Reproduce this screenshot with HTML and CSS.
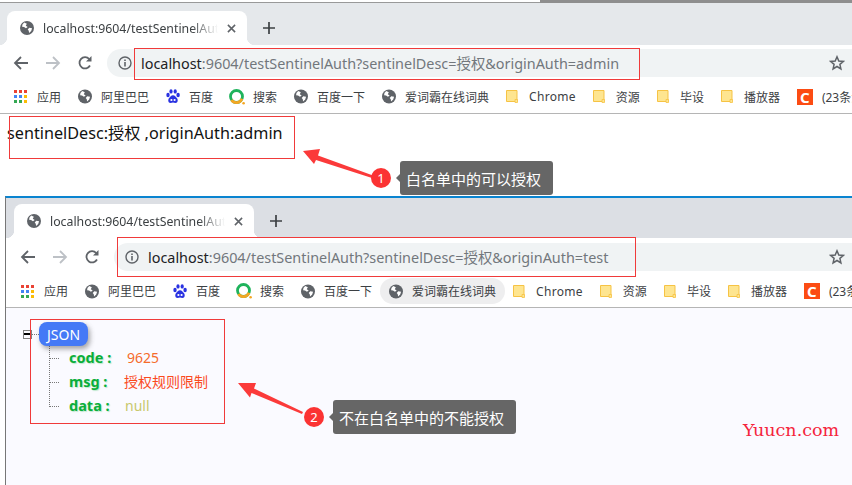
FILE: index.html
```html
<!DOCTYPE html>
<html lang="zh-CN">
<head>
<meta charset="utf-8">
<title>localhost:9604/testSentinelAuth</title>
<link rel="stylesheet" href="styles.css">
</head>
<body>
<svg class="defs" width="0" height="0" aria-hidden="true">
  <symbol id="globe" viewBox="0 0 16 16">
    <circle cx="8" cy="8" r="8" fill="#5f6368"/>
    <path d="M4.800 1.800 7.800 3.200 6.600 5.400 8.800 6.800 6.800 8.200 4.600 6.800 2.400 6.600 2.800 4Z" fill="#fff"/>
    <path d="M10.600 7.600 13.800 8.200 12.800 11.400 10.400 13.600 10 11 8.800 9.800Z" fill="#fff"/>
  </symbol>
  <symbol id="folder" viewBox="0 0 12 13">
    <path d="M.5.5h10.500v11h-10.500Z" fill="#fee590" stroke="#f6c344"/>
    <path d="M9 9.500h2.500v3h-2.500Z" fill="#fee590" stroke="#f6c344" stroke-width=".8"/>
  </symbol>
  <symbol id="apps" viewBox="0 0 13 13">
    <path d="M0 0h3v3H0z" fill="#ea4335"/><path d="M5 0h3v3H5z" fill="#ea4335"/><path d="M10 0h3v3h-3z" fill="#ea4335"/>
    <path d="M0 5h3v3H0z" fill="#4285f4"/><path d="M5 5h3v3H5z" fill="#4285f4"/><path d="M10 5h3v3h-3z" fill="#fbbc05"/>
    <path d="M0 10h3v3H0z" fill="#34a853"/><path d="M5 10h3v3H5z" fill="#34a853"/><path d="M10 10h3v3h-3z" fill="#fbbc05"/>
  </symbol>
  <symbol id="paw" viewBox="0 0 14 15">
    <g fill="#2932e1">
      <ellipse cx="2" cy="6" rx="1.700" ry="2.200"/><ellipse cx="5" cy="2.400" rx="1.600" ry="2.200"/>
      <ellipse cx="9.200" cy="2.400" rx="1.600" ry="2.200"/><ellipse cx="12.100" cy="6" rx="1.700" ry="2.200"/>
      <path d="M7 6.200c2 0 2.600 1.600 3.800 2.800 1.400 1.400 1.400 5-1.400 5-1 0-1.600-.4-2.400-.4s-1.400.4-2.400.4c-2.800 0-2.800-3.600-1.400-5C4.400 7.800 5 6.200 7 6.200Z"/>
    </g>
    <circle cx="5.400" cy="11" r="1.100" fill="#fff"/><circle cx="8.600" cy="11" r="1.100" fill="#fff"/>
  </symbol>
  <symbol id="search360" viewBox="0 0 16 16">
    <circle cx="7.500" cy="7.500" r="6" fill="none" stroke="#1fb35c" stroke-width="2.800"/>
    <path d="M2.500 11A6 6 0 0 0 13 9.800" fill="none" stroke="#f5a623" stroke-width="2.800"/>
    <circle cx="14.600" cy="14.200" r="1.300" fill="#f5a623"/>
  </symbol>
  <symbol id="back" viewBox="0 0 16 16"><path d="M15 8H2M8 2 2 8l6 6" fill="none" stroke="currentColor" stroke-width="1.800"/></symbol>
  <symbol id="forward" viewBox="0 0 16 16"><path d="M1 8h13M8 2l6 6-6 6" fill="none" stroke="currentColor" stroke-width="1.800"/></symbol>
  <symbol id="reload" viewBox="0 0 16 16">
    <path d="M13 10.500A5.600 5.600 0 1 1 12.200 4" fill="none" stroke="currentColor" stroke-width="1.800"/>
    <path d="M14.500 1v5.500H9Z" fill="currentColor"/>
  </symbol>
  <symbol id="info" viewBox="0 0 14 14">
    <circle cx="7" cy="7" r="6" fill="none" stroke="#5f6368" stroke-width="1.400"/>
    <path d="M6.200 6h1.600v4.400H6.200zM6.200 3.400h1.600V5H6.200z" fill="#5f6368"/>
  </symbol>
  <symbol id="star" viewBox="0 0 16 16">
    <path d="m8 1.800 1.800 4.200 4.600.4-3.500 3 1 4.500L8 11.500l-3.900 2.400 1-4.500-3.500-3 4.600-.4Z" fill="none" stroke="#5f6368" stroke-width="1.500"/>
  </symbol>
  <symbol id="close" viewBox="0 0 10 10"><path d="m1 1 8 8M9 1 1 9" stroke="#5f6368" stroke-width="1.700"/></symbol>
  <symbol id="plus" viewBox="0 0 12 12"><path d="M6 0v12M0 6h12" stroke="#3c4043" stroke-width="1.700"/></symbol>
</svg>

<div class="desktop-strip"><span class="strip-light"></span><span class="strip-dark"></span></div>

<section class="window window-top">
  <div class="tabstrip">
    <div class="tab">
      <svg class="ic16"><use href="#globe"/></svg>
      <span class="tab-title">localhost:9604/testSentinelAuth?sentinelDesc</span>
      <svg class="ic-close"><use href="#close"/></svg>
    </div>
    <svg class="ic-plus"><use href="#plus"/></svg>
  </div>
  <div class="toolbar">
    <svg class="nav"><use href="#back"/></svg>
    <svg class="nav nav-off"><use href="#forward"/></svg>
    <svg class="nav"><use href="#reload"/></svg>
    <div class="omnibox">
      <svg class="ic-info"><use href="#info"/></svg>
      <span class="url"><b>localhost</b>:9604/testSentinelAuth?sentinelDesc=授权&amp;originAuth=admin</span>
      <svg class="ic-star"><use href="#star"/></svg>
    </div>
  </div>
  <div class="bookmarks">
    <span class="bm"><svg class="ic-apps"><use href="#apps"/></svg>应用</span>
    <span class="bm"><svg class="ic15"><use href="#globe"/></svg>阿里巴巴</span>
    <span class="bm"><svg class="ic15"><use href="#paw"/></svg>百度</span>
    <span class="bm bm-q"><svg class="ic-q"><use href="#search360"/></svg>搜索</span>
    <span class="bm"><svg class="ic15"><use href="#globe"/></svg>百度一下</span>
    <span class="bm"><svg class="ic15"><use href="#globe"/></svg>爱词霸在线词典</span>
    <span class="bm bm-chrome"><svg class="ic-folder"><use href="#folder"/></svg>Chrome</span>
    <span class="bm"><svg class="ic-folder"><use href="#folder"/></svg>资源</span>
    <span class="bm"><svg class="ic-folder"><use href="#folder"/></svg>毕设</span>
    <span class="bm"><svg class="ic-folder"><use href="#folder"/></svg>播放器</span>
    <span class="bm"><span class="csdn">C</span>(23条消息)</span>
  </div>
  <main class="page-plain">sentinelDesc:授权 ,originAuth:admin</main>
</section>

<section class="window window-bottom">
  <div class="tabstrip">
    <div class="tab">
      <svg class="ic16"><use href="#globe"/></svg>
      <span class="tab-title">localhost:9604/testSentinelAuth?sentinelDesc</span>
      <svg class="ic-close"><use href="#close"/></svg>
    </div>
    <svg class="ic-plus"><use href="#plus"/></svg>
  </div>
  <div class="toolbar">
    <svg class="nav"><use href="#back"/></svg>
    <svg class="nav nav-off"><use href="#forward"/></svg>
    <svg class="nav"><use href="#reload"/></svg>
    <div class="omnibox">
      <svg class="ic-info"><use href="#info"/></svg>
      <span class="url"><b>localhost</b>:9604/testSentinelAuth?sentinelDesc=授权&amp;originAuth=test</span>
      <svg class="ic-star"><use href="#star"/></svg>
    </div>
  </div>
  <div class="bookmarks">
    <span class="bm"><svg class="ic-apps"><use href="#apps"/></svg>应用</span>
    <span class="bm"><svg class="ic15"><use href="#globe"/></svg>阿里巴巴</span>
    <span class="bm"><svg class="ic15"><use href="#paw"/></svg>百度</span>
    <span class="bm bm-q"><svg class="ic-q"><use href="#search360"/></svg>搜索</span>
    <span class="bm"><svg class="ic15"><use href="#globe"/></svg>百度一下</span>
    <span class="bm bm-hover"><svg class="ic15"><use href="#globe"/></svg>爱词霸在线词典</span>
    <span class="bm bm-chrome"><svg class="ic-folder"><use href="#folder"/></svg>Chrome</span>
    <span class="bm"><svg class="ic-folder"><use href="#folder"/></svg>资源</span>
    <span class="bm"><svg class="ic-folder"><use href="#folder"/></svg>毕设</span>
    <span class="bm"><svg class="ic-folder"><use href="#folder"/></svg>播放器</span>
    <span class="bm"><span class="csdn">C</span>(23条消息)</span>
  </div>
  <main class="page-json">
    <div class="tree-head">
      <span class="toggle"></span>
      <span class="tree-dots"></span>
      <span class="json-badge">JSON</span>
    </div>
    <ul class="tree-list">
      <li class="tree-row"><span class="key key-code">code :</span><span class="val val-num">9625</span></li>
      <li class="tree-row"><span class="key key-msg">msg :</span><span class="val val-str">授权规则限制</span></li>
      <li class="tree-row"><span class="key key-data">data :</span><span class="val val-null">null</span></li>
    </ul>
  </main>
</section>

<div class="mark mark-url-top"></div>
<div class="mark mark-url-bottom"></div>
<div class="mark mark-text"></div>
<div class="mark mark-json"></div>

<svg class="arrows" width="852" height="485" aria-hidden="true">
  <path d="M303 151 320 149 318 155.500 373 175.500 372 178 316 160 314 164Z" fill="#fb3a3a"/>
  <path d="M238 383 256 383 254 388.500 303 412 302 414 251.500 393 250 397.500Z" fill="#fb3a3a"/>
</svg>

<div class="note note-one"><span class="num">1</span><span class="tip">白名单中的可以授权</span></div>
<div class="note note-two"><span class="num">2</span><span class="tip">不在白名单中的不能授权</span></div>

<div class="watermark">Yuucn.com</div>
</body>
</html>
```
FILE: styles.css
```css
* { box-sizing: border-box; }
html, body { margin: 0; padding: 0; }
body {
  position: relative;
  width: 852px;
  height: 485px;
  overflow: hidden;
  background: #fff;
  font-family: "Noto Sans", "Noto Sans CJK SC", sans-serif;
  color: #202124;
}
.defs { position: absolute; }

.desktop-strip { display: flex; height: 3px; }
.strip-light { width: 540px; background: #fff; border-bottom: 1px solid #999; }
.strip-dark { flex: 1; background: #8e8e8e; }

.window { display: flex; flex-direction: column; }
.window-top { height: 193px; }
.window-bottom {
  height: 289px;
  margin-left: 5px;
  border-top: 2px solid #0a84d0;
  border-left: 1px solid #777;
}

.tabstrip { display: flex; align-items: flex-end; }
.window-top .tabstrip { height: 42px; padding-left: 7px; background: #e5e8eb; }
.window-bottom .tabstrip { height: 40px; padding-left: 8px; background: #dcdfe4; }

.tab {
  position: relative;
  display: flex;
  align-items: center;
  width: 240px;
  height: 34px;
  padding-left: 13px;
  background: #fff;
  border-radius: 8px 8px 0 0;
}
.tab::before, .tab::after {
  content: "";
  position: absolute;
  bottom: 0;
  width: 8px;
  height: 8px;
}
.tab::before { left: -8px; background: radial-gradient(circle at 0 0, transparent 8px, #fff 8.500px); }
.tab::after { right: -8px; background: radial-gradient(circle at 100% 0, transparent 8px, #fff 8.500px); }
.ic16 { width: 14px; height: 14px; flex: none; }
.tab-title {
  width: 175px;
  margin-left: 9px;
  overflow: hidden;
  white-space: nowrap;
  font-size: 12.300px;
  color: #3c4043;
  -webkit-mask-image: linear-gradient(to right, #000 85%, transparent);
  mask-image: linear-gradient(to right, #000 85%, transparent);
}
.ic-close { width: 9px; height: 9px; margin-left: 9px; flex: none; }
.ic-plus { width: 12px; height: 12px; margin: 0 0 11px 16px; }

.toolbar { display: flex; align-items: center; padding-left: 5px; background: #fff; }
.window-top .toolbar { height: 35px; }
.window-bottom .toolbar { height: 37px; padding-left: 6px; }
.nav { width: 32px; height: 16px; color: #5f6368; }
.nav-off { color: #bdc1c6; }
.omnibox {
  display: flex;
  align-items: center;
  flex: 1;
  height: 28px;
  margin-left: 6px;
  padding-left: 11px;
  background: #f0f3f4;
  border-radius: 14px 0 0 14px;
}
.ic-info { width: 14px; height: 14px; flex: none; }
.url {
  flex: 1;
  margin-left: 9px;
  font-size: 14.400px;
  white-space: nowrap;
  color: #72777c;
}
.url b { font-weight: 400; color: #202124; }
.ic-star { width: 16px; height: 16px; margin-right: 7px; flex: none; }

.bookmarks {
  display: flex;
  align-items: center;
  gap: 17px;
  height: 33px;
  padding-left: 14px;
  overflow: hidden;
  white-space: nowrap;
  font-size: 12px;
  color: #3c4043;
  background: #fff;
  border-bottom: 1px solid #b5b5b5;
}
.window-top .bookmarks { height: 34px; }
.window-bottom .bookmarks { height: 33px; padding-left: 15px; }
.bm { display: inline-flex; align-items: center; gap: 9px; flex: none; }
.bm-q { gap: 8px; margin-left: -1px; }
.bm-chrome { letter-spacing: .3px; }
.bm-hover { margin: 0 -9px; padding: 0 9px; height: 26px; background: #eeeeef; border-radius: 13px; }
.ic15 { width: 14px; height: 15px; flex: none; }
.ic-q { width: 16px; height: 16px; flex: none; }
.ic-apps { width: 13px; height: 13px; margin-right: 1px; flex: none; }
.ic-folder { width: 12px; height: 13px; margin-right: 2px; flex: none; }
.csdn {
  display: inline-flex;
  align-items: center;
  justify-content: center;
  width: 16px;
  height: 16px;
  background: #fc4c13;
  color: #fff;
  font-size: 15px;
  font-weight: 700;
}

.page-plain {
  flex: 1;
  padding: 7px 0 0 7px;
  font-size: 16.200px;
  line-height: 24px;
  color: #111;
}
.page-json { position: relative; flex: 1; background: #fafaff; padding: 14px 0 0 17px; }

.tree-head { display: flex; align-items: center; height: 24px; }
.toggle {
  position: relative;
  width: 9px;
  height: 9px;
  border: 1px solid #808080;
  background: #fafaff;
}
.toggle::after {
  content: "";
  position: absolute;
  left: 0;
  right: 0;
  top: 2px;
  height: 2px;
  background: #000;
}
.tree-dots { width: 7px; border-top: 1px dotted #777; }
.json-badge {
  display: flex;
  align-items: center;
  justify-content: center;
  width: 49px;
  height: 24px;
  border-radius: 8px;
  background: #4479f6;
  color: #fff;
  font-size: 14px;
  box-shadow: 2px 3px 5px rgba(60, 60, 60, .45);
}
.tree-list {
  display: flex;
  flex-direction: column;
  width: 190px;
  height: 61px;
  margin: 0 0 0 26px;
  padding: 0;
  list-style: none;
  border-left: 1px dotted #777;
}
.tree-row {
  position: relative;
  display: flex;
  align-items: center;
  flex: none;
  height: 24px;
  padding: 0 0 2px 19px;
}
.tree-row::before {
  content: "";
  position: absolute;
  left: 0;
  top: 12px;
  width: 9px;
  border-top: 1px dotted #777;
}
.key {
  font-size: 14.500px;
  font-weight: 700;
  color: #0aae3a;
  text-shadow: 1px 1px 1px rgba(10, 174, 58, .25);
}
.val { font-size: 14px; }
.key-code { width: 58px; }
.key-msg { width: 55px; }
.key-data { width: 56px; }
.val-num { color: #f56b2b; }
.val-str { color: #fb4a1e; }
.val-null { color: #c8c86c; }

.mark { position: absolute; border: 1px solid #f03a3a; }
.mark-url-top { left: 134px; top: 48px; width: 506px; height: 32px; }
.mark-url-bottom { left: 117px; top: 237px; width: 519px; height: 40px; }
.mark-text { left: 9px; top: 116px; width: 286px; height: 43px; }
.mark-json { left: 30px; top: 319px; width: 195px; height: 105px; }

.arrows { position: absolute; left: 0; top: 0; }

.note { position: absolute; display: flex; align-items: center; height: 34px; }
.note-one { left: 371px; top: 161px; }
.note-two { left: 304px; top: 400px; }
.num {
  display: flex;
  align-items: center;
  justify-content: center;
  width: 20px;
  height: 20px;
  border-radius: 50%;
  background: #fb3333;
  color: #fff;
  font-size: 13px;
}
.tip {
  position: relative;
  display: flex;
  align-items: center;
  height: 34px;
  margin-left: 9px;
  padding: 0 12px 0 6px;
  border-radius: 3px;
  background: #666;
  color: #fff;
  font-size: 15px;
  white-space: nowrap;
}
.tip::before {
  content: "";
  position: absolute;
  left: -4px;
  top: 13px;
  border-style: solid;
  border-width: 4px 4px 4px 0;
  border-color: transparent #666 transparent transparent;
}
.watermark {
  position: absolute;
  left: 743px;
  top: 420px;
  font-family: "DejaVu Serif", serif;
  font-size: 17.500px;
  line-height: 20px;
  color: #f5243c;
}
```
